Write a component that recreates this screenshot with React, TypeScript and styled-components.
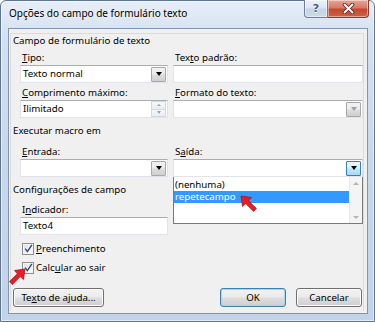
import React from 'react';
import styled, { createGlobalStyle } from 'styled-components';

const Global = createGlobalStyle`
  html, body { margin: 0; padding: 0; }
  body {
    width: 375px; height: 322px; overflow: hidden; background: #fff;
    font-family: "Noto Sans", "Open Sans", sans-serif; font-size: 9.7px; color: #000;
  }
  * { box-sizing: border-box; }
`;

const Window = styled.div`
  position: relative;
  width: 375px;
  height: 322px;
  display: flex;
  flex-direction: column;
  padding: 0 6px 7px 7px;
  border: 1px solid #5f7591;
  border-radius: 6px 6px 0 0;
  background: linear-gradient(180deg, #e6eef8 0%, #d3e0f0 12%, #c7d7ec 50%, #c2d3e9 100%);
  box-shadow: inset 0 0 0 1px rgba(255, 255, 255, 0.55);
`;

const TitleBar = styled.div`
  height: 27px;
  flex: none;
  display: flex;
  align-items: flex-start;
  justify-content: space-between;
`;

const Title = styled.div`
  padding: 6px 0 0 1px;
  font-size: 10px;
  line-height: 13px;
  color: #000;
  text-shadow: 0 0 6px rgba(255, 255, 255, 0.9);
`;

const Controls = styled.div`
  display: flex;
  margin-top: -1px;
  margin-right: -1px;
`;

const CaptionButton = styled.div<{ $close?: boolean }>`
  height: 18px;
  width: ${(p) => (p.$close ? '41px' : '24px')};
  display: flex;
  align-items: center;
  justify-content: center;
  border: 1px solid ${(p) => (p.$close ? '#8a3a2e' : '#6d7f99')};
  border-top: none;
  border-left: ${(p) => (p.$close ? 'none' : '1px solid #6d7f99')};
  border-radius: ${(p) => (p.$close ? '0 0 4px 0' : '0 0 0 4px')};
  background: ${(p) =>
    p.$close
      ? 'linear-gradient(180deg, #e8a597 0%, #d97a66 45%, #c14a33 55%, #d0603f 100%)'
      : 'linear-gradient(180deg, #eef3fa 0%, #dbe5f2 45%, #c5d4e8 55%, #ccdaeb 100%)'};
  box-shadow: inset 0 0 0 1px rgba(255, 255, 255, 0.45);
  color: #4b5f7d;
  font-family: "DejaVu Sans", sans-serif;
  font-size: 11px;
  font-weight: bold;
  text-shadow: 0 1px 0 #fff;
`;

const Client = styled.div`
  flex: 1;
  display: flex;
  flex-direction: column;
  background: #f0f0f0;
  border: 1px solid #8395ae;
  padding: 4px 3px 2px 1px;
`;

const Panel = styled.div`
  flex: 1;
  display: flex;
  flex-direction: column;
  border: 1px solid #dcdcdc;
  border-bottom: none;
  padding: 0 1px 0 1px;
`;

const SectionHeader = styled.div<{ $gap: number }>`
  align-self: flex-start;
  margin-top: ${(p) => p.$gap}px;
  padding-left: 1px;
  line-height: 13px;
  height: 13px;
`;

const FieldGrid = styled.div<{ $gap: number }>`
  margin-top: ${(p) => p.$gap}px;
  margin-left: 8px;
  display: grid;
  grid-template-columns: 148px 190px;
  column-gap: 5px;
  row-gap: 2px;
`;

const Field = styled.div`
  position: relative;
  display: flex;
  flex-direction: column;
`;

const Label = styled.div`
  align-self: flex-start;
  height: 15px;
  line-height: 15px;
  padding-left: 2px;
  white-space: nowrap;
`;

const Key = styled.span`
  text-decoration: underline;
  text-underline-offset: 1px;
`;

const Box = styled.div`
  height: 18px;
  display: flex;
  align-items: center;
  background: #fff;
  border: 1px solid #e2e3ea;
  border-top-color: #abadb3;
  padding: 0 1px 0 2px;
  line-height: 14px;
`;

const BoxValue = styled.div`
  flex: 1;
  white-space: nowrap;
`;

const DropButton = styled.div<{ $hot?: boolean }>`
  width: 15px;
  height: 15px;
  display: flex;
  align-items: center;
  justify-content: center;
  border: 1px solid ${(p) => (p.$hot ? '#3c7fb1' : '#a8a8a8')};
  border-radius: 1px;
  background: ${(p) =>
    p.$hot
      ? 'linear-gradient(180deg, #eaf6fd 0%, #d9f0fc 45%, #bee6fd 55%, #a7d9f5 100%)'
      : 'linear-gradient(180deg, #f2f2f2 0%, #ebebeb 45%, #dddddd 55%, #cfcfcf 100%)'};
`;

const DownArrow = styled.div<{ $color?: string; $size?: number }>`
  width: 0;
  height: 0;
  border-left: ${(p) => p.$size ?? 3.5}px solid transparent;
  border-right: ${(p) => p.$size ?? 3.5}px solid transparent;
  border-top: ${(p) => (p.$size ?? 3.5) + 0.5}px solid ${(p) => p.$color ?? '#000'};
`;

const UpArrow = styled.div<{ $color?: string; $size?: number }>`
  width: 0;
  height: 0;
  border-left: ${(p) => p.$size ?? 3}px solid transparent;
  border-right: ${(p) => p.$size ?? 3}px solid transparent;
  border-bottom: ${(p) => p.$size ?? 3}px solid ${(p) => p.$color ?? '#000'};
`;

const SpinButtons = styled.div`
  width: 15px;
  height: 16px;
  display: flex;
  flex-direction: column;
`;

const SpinHalf = styled.div`
  flex: 1;
  display: flex;
  align-items: center;
  justify-content: center;
  border: 1px solid #d3d9e2;
  background: linear-gradient(180deg, #f7f9fb, #e9edf2);
  & + & { border-top: none; }
`;

const DropList = styled.div`
  position: absolute;
  top: 33px;
  left: 0;
  right: 0;
  height: 47px;
  display: flex;
  background: #fff;
  border: 1px solid #7a7a7a;
  border-top: none;
  z-index: 2;
`;

const ListItems = styled.div`
  flex: 1;
  padding-top: 2px;
`;

const ListItem = styled.div<{ $selected?: boolean }>`
  height: 12px;
  line-height: 12px;
  padding-left: 1px;
  white-space: nowrap;
  background: ${(p) => (p.$selected ? '#3399ff' : 'transparent')};
  color: ${(p) => (p.$selected ? '#fff' : '#000')};
`;

const ListScroll = styled.div`
  width: 13px;
  display: flex;
  flex-direction: column;
  justify-content: space-between;
  align-items: center;
  padding: 5px 0 4px;
  background: #f4f4f4;
  border-left: 1px solid #eaeaea;
`;

const CheckRow = styled.label<{ $first?: boolean }>`
  align-self: flex-start;
  margin-top: ${(p) => (p.$first ? 4 : 0)}px;
  margin-left: 10px;
  height: 19px;
  display: flex;
  align-items: center;
  gap: 2px;
`;

const CheckBox = styled.div`
  width: 12px;
  height: 12px;
  display: flex;
  align-items: center;
  justify-content: center;
  border: 1px solid #8e8f8f;
  background: linear-gradient(135deg, #dcdcdc 0%, #f2f2f2 60%, #ffffff 100%);
  box-shadow: inset 0 0 0 1px #f4f4f4;
`;

const ButtonRow = styled.div`
  margin-top: 11px;
  margin-left: 1px;
  display: flex;
  align-items: center;
`;

const PushButton = styled.div<{ $default?: boolean; $width: number }>`
  width: ${(p) => p.$width}px;
  height: 19px;
  display: flex;
  align-items: center;
  justify-content: center;
  border: 1px solid ${(p) => (p.$default ? '#3c7fb1' : '#707070')};
  border-radius: 3px;
  background: linear-gradient(180deg, #f2f2f2 0%, #ebebeb 45%, #dddddd 55%, #cfcfcf 100%);
  box-shadow: inset 0 0 0 1px ${(p) => (p.$default ? '#9fd8f5' : '#fbfbfb')};
  white-space: nowrap;
`;

const Spacer = styled.div<{ $width?: number }>`
  ${(p) => (p.$width ? `width: ${p.$width}px;` : 'flex: 1;')}
`;

const Pointer = styled.svg<{ $x: number; $y: number; $flip?: boolean }>`
  position: absolute;
  left: ${(p) => p.$x}px;
  top: ${(p) => p.$y}px;
  width: 18px;
  height: 18px;
  transform: ${(p) => (p.$flip ? 'scaleX(-1)' : 'none')};
  z-index: 5;
  overflow: visible;
`;

const RedArrow = ({ x, y, flip }: { x: number; y: number; flip?: boolean }) => (
  <Pointer $x={x} $y={y} $flip={flip} viewBox="0 0 18 18">
    <polygon
      points="1,1 11.5,2.5 8.6,5.8 16.5,13.6 13.6,16.5 5.8,8.6 2.5,11.5"
      fill="#ec1b24"
      stroke="#9b1016"
      strokeWidth="0.7"
      strokeLinejoin="round"
    />
  </Pointer>
);

const Check = () => (
  <svg width="9" height="9" viewBox="0 0 9 9">
    <path d="M1.2 4.6 L3.4 7.6 L7.9 0.8" fill="none" stroke="#2b4a85" strokeWidth="1.4" />
  </svg>
);

export default function App() {
  return (
    <>
      <Global />
      <Window>
        <TitleBar>
          <Title>Opções do campo de formulário texto</Title>
          <Controls>
            <CaptionButton>?</CaptionButton>
            <CaptionButton $close>
              <svg width="13" height="11" viewBox="0 0 13 11">
                <path d="M2.5 1.5 L10.5 9.5 M10.5 1.5 L2.5 9.5" stroke="#5a1e17" strokeWidth="3.6" strokeLinecap="round" />
                <path d="M2.5 1.5 L10.5 9.5 M10.5 1.5 L2.5 9.5" stroke="#ffffff" strokeWidth="2" strokeLinecap="round" />
              </svg>
            </CaptionButton>
          </Controls>
        </TitleBar>
        <Client>
          <Panel>
            <SectionHeader $gap={0}>Campo de formulário de texto</SectionHeader>
            <FieldGrid $gap={3}>
              <Field>
                <Label><Key>T</Key>ipo:</Label>
                <Box>
                  <BoxValue>Texto normal</BoxValue>
                  <DropButton><DownArrow /></DropButton>
                </Box>
              </Field>
              <Field>
                <Label>Tex<Key>t</Key>o padrão:</Label>
                <Box />
              </Field>
              <Field>
                <Label><Key>C</Key>omprimento máximo:</Label>
                <Box>
                  <BoxValue>Ilimitado</BoxValue>
                  <SpinButtons>
                    <SpinHalf><UpArrow $color="#8ea3bd" $size={2.5} /></SpinHalf>
                    <SpinHalf><DownArrow $color="#8ea3bd" $size={2.5} /></SpinHalf>
                  </SpinButtons>
                </Box>
              </Field>
              <Field>
                <Label><Key>F</Key>ormato do texto:</Label>
                <Box>
                  <BoxValue />
                  <DropButton><DownArrow $color="#a0a0a0" /></DropButton>
                </Box>
              </Field>
            </FieldGrid>

            <SectionHeader $gap={6}>Executar macro em</SectionHeader>
            <FieldGrid $gap={7}>
              <Field>
                <Label><Key>E</Key>ntrada:</Label>
                <Box>
                  <BoxValue />
                  <DropButton><DownArrow /></DropButton>
                </Box>
              </Field>
              <Field>
                <Label>S<Key>a</Key>ída:</Label>
                <Box>
                  <BoxValue />
                  <DropButton $hot><DownArrow /></DropButton>
                </Box>
                <DropList>
                  <ListItems>
                    <ListItem>(nenhuma)</ListItem>
                    <ListItem $selected>repetecampo</ListItem>
                  </ListItems>
                  <ListScroll>
                    <UpArrow $color="#b5b5b5" $size={3} />
                    <DownArrow $color="#b5b5b5" $size={3} />
                  </ListScroll>
                </DropList>
              </Field>
            </FieldGrid>

            <SectionHeader $gap={6}>Configurações de campo</SectionHeader>
            <FieldGrid $gap={6}>
              <Field>
                <Label>I<Key>n</Key>dicador:</Label>
                <Box>
                  <BoxValue>Texto4</BoxValue>
                </Box>
              </Field>
            </FieldGrid>

            <CheckRow $first>
              <CheckBox><Check /></CheckBox>
              <span><Key>P</Key>reenchimento</span>
            </CheckRow>
            <CheckRow>
              <CheckBox><Check /></CheckBox>
              <span>Calc<Key>u</Key>lar ao sair</span>
            </CheckRow>

            <ButtonRow>
              <PushButton $width={91}>Te<Key>x</Key>to de ajuda...</PushButton>
              <Spacer />
              <PushButton $default $width={66}>OK</PushButton>
              <Spacer $width={10} />
              <PushButton $width={66}>Cancelar</PushButton>
            </ButtonRow>
          </Panel>
        </Client>
        <RedArrow x={239} y={194} />
        <RedArrow x={7} y={267} flip />
      </Window>
    </>
  );
}
